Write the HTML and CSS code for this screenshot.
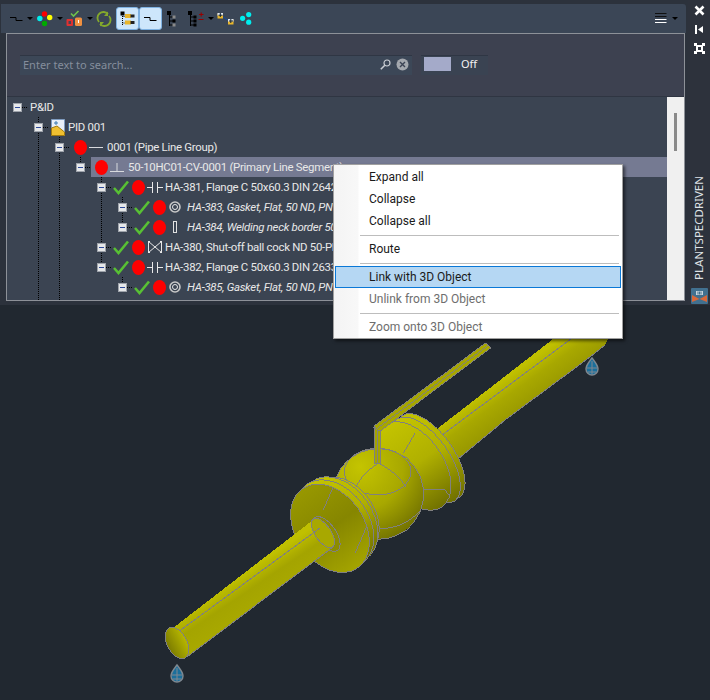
FILE: index.html
```html
<!DOCTYPE html>
<html lang="en">
<head>
<meta charset="utf-8">
<title>Plant Spec Driven</title>
<link rel="stylesheet" href="styles.css">
</head>
<body>
<div class="app">
  <div class="top">
    <section class="palette">
      <div class="toolbar">
        <div class="tool w-line">
          <svg width="13" height="6" viewBox="0 0 13 6"><path d="M0 1.500H6V4.500H12.500" fill="none" stroke="#000" stroke-width="1"/></svg>
          <span class="caret"></span>
        </div>
        <div class="tool w-dots">
          <svg width="16" height="16" viewBox="0 0 16 16"><circle cx="7.500" cy="3" r="2.700" fill="#f00"/><circle cx="2.800" cy="7.500" r="2.700" fill="#0ee"/><circle cx="12.700" cy="6.500" r="2.700" fill="#ff0"/><circle cx="7.500" cy="12.500" r="2.700" fill="#0a0"/></svg>
          <span class="caret"></span>
        </div>
        <div class="tool w-check">
          <svg width="17" height="17" viewBox="0 0 17 17"><path d="M5 3.500L7.500 6 12.500 1" fill="none" stroke="#6fc24a" stroke-width="1.600"/><rect x="0.500" y="9" width="6.500" height="7" rx="1" fill="#e03030"/><rect x="2.500" y="11" width="2.500" height="3" fill="#4a4450"/><rect x="9" y="7.500" width="7" height="8.500" rx="1.500" fill="#f09040"/><path d="M12.500 10v3" stroke="#fff"/></svg>
          <span class="caret"></span>
        </div>
        <div class="tool w-sync">
          <svg width="16" height="16" viewBox="0 0 16 16"><path d="M3 11A6 6 0 0 1 12 3M13 5A6 6 0 0 1 4 13" fill="none" stroke="#84a92c" stroke-width="1.800"/><path d="M12 0.500V5H8zM4 15.500V11H8z" fill="#84a92c"/></svg>
        </div>
        <div class="toggle">
          <svg width="15" height="16" viewBox="0 0 15 16"><path d="M2.500 3V14M2.500 5.500H7M2.500 12H7" fill="none" stroke="#000" stroke-dasharray="1 1"/><rect x="0.500" y="0.500" width="4" height="4" fill="#000"/><rect x="5" y="3" width="6" height="4" fill="#e8b52c"/><rect x="5" y="9.500" width="6" height="4" fill="#e8b52c"/><rect x="10.500" y="3.500" width="4" height="3" fill="#222"/><rect x="10.500" y="10" width="4" height="3" fill="#222"/></svg>
        </div>
        <div class="toggle second">
          <svg width="13" height="6" viewBox="0 0 13 6"><path d="M0 1.500H6V4.500H12.500" fill="none" stroke="#000" stroke-width="1"/></svg>
        </div>
        <div class="tool w-tree">
          <svg width="9" height="16" viewBox="0 0 9 16"><path d="M2.500 2V15M2.500 6H6M2.500 10H6M2.500 14H6" stroke="#000"/><rect x="0" y="0" width="4" height="4"/><rect x="5.500" y="4.500" width="3" height="3" fill="#8a8a8a"/><rect x="5.500" y="8.500" width="3" height="3"/><rect x="5.500" y="12.500" width="3" height="3" fill="#8a8a8a"/></svg>
        </div>
        <div class="tool w-tree2">
          <svg width="16" height="16" viewBox="0 0 16 16"><path d="M2.500 2V15M2.500 6H6M2.500 10H6M2.500 14H6" stroke="#000"/><rect x="0" y="0" width="4" height="4"/><rect x="5.500" y="4.500" width="3" height="3"/><rect x="5.500" y="8.500" width="3" height="3"/><rect x="5.500" y="12.500" width="3" height="3"/><path d="M11 3.500H15.500M13.200 1.500V5.500M10.500 8.500H15.500" stroke="#900" stroke-width="1.100"/></svg>
          <span class="caret"></span>
        </div>
        <div class="tool w-link">
          <svg width="17" height="13" viewBox="0 0 17 13"><rect x="0.500" y="1.500" width="5.500" height="5" fill="#e8b52c"/><rect x="0.500" y="1" width="5.500" height="2.500" fill="#dfe6ee"/><path d="M1.500 3.200H5.500M3.300 1V5" stroke="#123" stroke-width="1"/><path d="M6.500 5L10.500 8" stroke="#1c4c90" stroke-width="1.200"/><rect x="11" y="7.500" width="5.500" height="5" fill="#e8b52c"/><rect x="11" y="7" width="5.500" height="2.500" fill="#dfe6ee"/><path d="M12 9H16M13.800 7V11" stroke="#123" stroke-width="1"/></svg>
        </div>
        <div class="tool w-share">
          <svg width="12" height="13" viewBox="0 0 12 13"><circle cx="8.700" cy="2.600" r="2.600" fill="#0ee"/><circle cx="2.600" cy="6.300" r="2.600" fill="#0ee"/><circle cx="8.700" cy="10.200" r="2.600" fill="#0ee"/></svg>
        </div>
        <div class="menu-btn">
          <svg width="12" height="11" viewBox="0 0 12 11"><path d="M0 .5H11.500M0 3.500H11.500" stroke="#111"/><path d="M0 6.500H11.500" stroke="#fff"/><path d="M0 9.500H11.500" stroke="#fff"/></svg>
          <span class="caret"></span>
        </div>
      </div>

      <div class="frame">
        <div class="search-zone">
          <div class="search">
            <span class="search-text">Enter text to search...</span>
            <svg class="lens" width="11" height="11" viewBox="0 0 11 11"><circle cx="7" cy="4" r="3" fill="none" stroke="#c8ccd2" stroke-width="1.200"/><path d="M4.800 6.200L0.800 10.200" stroke="#c8ccd2" stroke-width="1.600"/></svg>
            <svg class="clear" width="13" height="13" viewBox="0 0 13 13"><circle cx="6.500" cy="6.500" r="6" fill="#a4a8ae"/><path d="M4 4L9 9M9 4L4 9" stroke="#3c4454" stroke-width="1.400"/></svg>
          </div>
          <div class="switch">
            <span class="swatch"></span>
            <span class="switch-label">Off</span>
          </div>
        </div>

        <div class="tree-zone">
          <div class="tree">
            <svg class="guides" width="130" height="204" viewBox="0 0 130 204"><path d="M31.500 20V204M52.500 40V204M73.500 60V68M94.500 80V170M115.500 100V130M115.500 180V186" stroke="#000" stroke-dasharray="1 1" fill="none"/></svg>

            <div class="row l0"><span class="exp"></span><span class="dots"></span><span class="label lt0">P&amp;ID</span></div>

            <div class="row l1"><span class="exp"></span><span class="dots"></span>
              <svg class="doc" width="14" height="17" viewBox="0 0 14 17"><path d="M0.500 0.500H13.500V16.500H0.500Z" fill="#e9f0f8" stroke="#7f9cc0"/><path d="M0.500 9L6 7 13.500 13V16.500H0.500Z" fill="#f0c030" stroke="#a07a10"/><path d="M3 4H7M5 2V6" stroke="#3978b0"/></svg>
              <span class="label lt1">PID 001</span>
            </div>

            <div class="row l2"><span class="exp"></span><span class="dots"></span><span class="red"></span>
              <svg class="sym s14" width="14" height="3" viewBox="0 0 14 3"><path d="M0 1.500H14" stroke="#d8dade"/></svg>
              <span class="label">0001 (Pipe Line Group)</span>
            </div>

            <div class="row l3"><span class="exp"></span><span class="dots"></span>
              <div class="sel">
                <span class="red"></span>
                <svg class="sym s14" width="14" height="9" viewBox="0 0 14 9"><path d="M0 8.500H14M7 0V8" stroke="#d8dade"/></svg>
                <span class="label">50-10HC01-CV-0001 (Primary Line Segment)</span>
              </div>
            </div>

            <div class="row l4"><span class="exp"></span><span class="dots"></span>
              <svg class="check" width="16" height="15" viewBox="0 0 16 15"><path d="M1 8L5.500 13 15 1.500" fill="none" stroke="#58c034" stroke-width="2.600"/></svg>
              <span class="red"></span>
              <svg class="sym" width="16" height="11" viewBox="0 0 16 11"><path d="M0 5.500H5.500M5.500 0V11M10.500 0V11M10.500 5.500H16" stroke="#e8e8e8"/></svg>
              <span class="label">HA-381, Flange C 50x60.3 DIN 2642 PN</span>
            </div>

            <div class="row l5"><span class="exp"></span><span class="dots"></span>
              <svg class="check" width="16" height="15" viewBox="0 0 16 15"><path d="M1 8L5.500 13 15 1.500" fill="none" stroke="#58c034" stroke-width="2.600"/></svg>
              <span class="red"></span>
              <svg class="sym gasket" width="12" height="12" viewBox="0 0 12 12"><circle cx="6" cy="6" r="5" fill="none" stroke="#c8c8c8" stroke-width="1.600"/><circle cx="6" cy="6" r="2.500" fill="none" stroke="#e8e8e8"/></svg>
              <span class="label it">HA-383, Gasket, Flat, 50 ND, PN 16</span>
            </div>

            <div class="row l5"><span class="exp"></span><span class="dots"></span>
              <svg class="check" width="16" height="15" viewBox="0 0 16 15"><path d="M1 8L5.500 13 15 1.500" fill="none" stroke="#58c034" stroke-width="2.600"/></svg>
              <span class="red"></span>
              <svg class="sym gasket" width="12" height="12" viewBox="0 0 12 12"><rect x="4.500" y="0.500" width="3" height="11" fill="none" stroke="#e0e0e0"/></svg>
              <span class="label it">HA-384, Welding neck border 50</span>
            </div>

            <div class="row l4"><span class="exp"></span><span class="dots"></span>
              <svg class="check" width="16" height="15" viewBox="0 0 16 15"><path d="M1 8L5.500 13 15 1.500" fill="none" stroke="#58c034" stroke-width="2.600"/></svg>
              <span class="red"></span>
              <svg class="sym" width="16" height="12" viewBox="0 0 16 12"><path d="M1.500 0.500V11.500L14.500 0.500V11.500ZM1 .5H3M1 11.500H3M13 .5H15M13 11.500H15" fill="none" stroke="#e8e8e8"/></svg>
              <span class="label">HA-380, Shut-off ball cock ND 50-PN</span>
            </div>

            <div class="row l4"><span class="exp"></span><span class="dots"></span>
              <svg class="check" width="16" height="15" viewBox="0 0 16 15"><path d="M1 8L5.500 13 15 1.500" fill="none" stroke="#58c034" stroke-width="2.600"/></svg>
              <span class="red"></span>
              <svg class="sym" width="16" height="11" viewBox="0 0 16 11"><path d="M0 5.500H5.500M5.500 0V11M10.500 0V11M10.500 5.500H16" stroke="#e8e8e8"/></svg>
              <span class="label">HA-382, Flange C 50x60.3 DIN 2633 PN</span>
            </div>

            <div class="row l5"><span class="exp"></span><span class="dots"></span>
              <svg class="check" width="16" height="15" viewBox="0 0 16 15"><path d="M1 8L5.500 13 15 1.500" fill="none" stroke="#58c034" stroke-width="2.600"/></svg>
              <span class="red"></span>
              <svg class="sym gasket" width="12" height="12" viewBox="0 0 12 12"><circle cx="6" cy="6" r="5" fill="none" stroke="#c8c8c8" stroke-width="1.600"/><circle cx="6" cy="6" r="2.500" fill="none" stroke="#e8e8e8"/></svg>
              <span class="label it">HA-385, Gasket, Flat, 50 ND, PN 16</span>
            </div>
          </div>
          <div class="scrollbar"><span class="thumb"></span></div>
        </div>
      </div>
    </section>

    <aside class="rail">
      <svg class="rail-ico" width="11" height="11" viewBox="0 0 11 11"><path d="M1.500 1.500L9.500 9.500M9.500 1.500L1.500 9.500" stroke="#fff" stroke-width="2.600"/></svg>
      <svg class="rail-ico" width="11" height="11" viewBox="0 0 11 11"><path d="M2 1V10" stroke="#fff" stroke-width="2"/><path d="M4 5.500L9 2V9Z" fill="#fff"/></svg>
      <svg class="rail-ico" width="11" height="11" viewBox="0 0 11 11"><path d="M0 0H3V2H8V0H11V3H9V8H11V11H8V9H3V11H0V8H2V3H0Z" fill="#fff" fill-rule="evenodd"/><rect x="4" y="4" width="3" height="3" fill="#2d323c"/></svg>
      <span class="rail-title">PLANTSPECDRIVEN</span>
      <svg class="rail-logo" width="17" height="16" viewBox="0 0 17 16"><rect width="17" height="16" rx="1" fill="#41708f"/><path d="M1 7L8.500 11 16 7V14L8.500 11 1 14Z" fill="#d8683a"/><path d="M5 3H12V7H5Z" fill="#c9d4dc"/><path d="M7 3.500V6.500M8.500 3.500V6.500M10 3.500V6.500" stroke="#41708f"/></svg>
    </aside>
  </div>

  <div class="viewport">
    <svg class="scene" width="710" height="395" viewBox="0 305 710 395">
      <defs>
        <linearGradient id="pipeR" gradientUnits="userSpaceOnUse" x1="500" y1="382" x2="520" y2="410">
          <stop offset="0" stop-color="#c0c000"/><stop offset=".45" stop-color="#a8a800"/><stop offset="1" stop-color="#9a9a00"/>
        </linearGradient>
        <linearGradient id="pipeL" gradientUnits="userSpaceOnUse" x1="243" y1="574" x2="262" y2="602">
          <stop offset="0" stop-color="#c0c000"/><stop offset=".5" stop-color="#a4a400"/><stop offset="1" stop-color="#a8a800"/>
        </linearGradient>
        <linearGradient id="flange" x1="0" y1="0" x2="0" y2="1">
          <stop offset="0" stop-color="#c4c400"/><stop offset=".5" stop-color="#b0b000"/><stop offset="1" stop-color="#707000"/>
        </linearGradient>
        <linearGradient id="face" x1="0" y1="0" x2="0" y2="1">
          <stop offset="0" stop-color="#989800"/><stop offset=".5" stop-color="#868600"/><stop offset="1" stop-color="#a4a400"/>
        </linearGradient>
        <radialGradient id="ball" cx=".3" cy=".2" r=".95">
          <stop offset="0" stop-color="#c4c400"/><stop offset=".5" stop-color="#a8a800"/><stop offset="1" stop-color="#666600"/>
        </radialGradient>
        <linearGradient id="inner" x1="0" y1="0" x2="1" y2="0">
          <stop offset="0" stop-color="#7c7c00"/><stop offset="1" stop-color="#b8b800"/>
        </linearGradient>
      </defs>

      <g class="solid">
        <polygon points="557,336 610,336 605,345 590,357 505,420 440,474 415,446" fill="url(#pipeR)"/>
        <path d="M430,444L575,336" class="wire"/>
        <path d="M440,474L505,420L590,357L605,345" class="wire"/>
      </g>

      <g class="solid" transform="translate(270 340) scale(.3333)">
        <ellipse cx="482" cy="350" rx="70" ry="150" transform="rotate(-35 482 350)" fill="url(#flange)" class="edge"/>
        <ellipse cx="468" cy="360" rx="70" ry="150" transform="rotate(-35 468 360)" fill="url(#flange)" class="edge"/>
        <ellipse cx="430" cy="378" rx="90" ry="150" transform="rotate(-35 430 378)" fill="url(#flange)" class="edge"/>
        <path d="M400 340L435 280M462 450H525M525 450L540 470" class="line"/>

        <circle cx="325" cy="462" r="136" fill="url(#ball)" class="edge"/>
        <ellipse cx="323" cy="395" rx="100" ry="70" class="line"/>
        <path d="M325 370C290 390 262 425 255 450M325 370C360 385 392 415 408 440M310 565C350 570 410 560 452 510" class="line"/>
        <polygon points="312,262 333,270 333,372 315,372" fill="#a4a400" class="edge"/>
        <path d="M323 270V372" class="line"/>
        <polygon points="312,258 648,8 662,24 335,270 322,272" fill="#a6a600" class="edge"/>
        <path d="M322 265L655 16" class="line"/>

        <ellipse cx="236" cy="520" rx="70" ry="118" transform="rotate(-35 236 520)" fill="url(#flange)" class="edge"/>
        <ellipse cx="222" cy="530" rx="92" ry="130" transform="rotate(-35 222 530)" fill="url(#flange)" class="edge"/>
        <ellipse cx="208" cy="540" rx="100" ry="142" transform="rotate(-35 208 540)" fill="url(#flange)" class="edge"/>
        <ellipse cx="193" cy="552" rx="103" ry="145" transform="rotate(-35 193 552)" fill="url(#flange)" class="edge"/>
        <ellipse cx="180" cy="565" rx="103" ry="145" transform="rotate(-35 180 565)" fill="url(#face)" class="edge"/>
        <path d="M190 440L160 510M290 560L255 640" class="line"/>
      </g>

      <g class="solid">
        <ellipse cx="326" cy="534" rx="10" ry="20" transform="rotate(-35 326 534)" fill="#8c8c00" class="wire"/>
        <polygon points="173,628 313,520 333,547 187,657" fill="url(#pipeL)"/>
        <ellipse cx="323" cy="533" rx="8" ry="17" transform="rotate(-35 323 533)" fill="#a8a800" class="wire"/>
        <path d="M187,657L333,547M178,632L320,528" class="wire"/>
        <ellipse cx="177" cy="643" rx="10" ry="17" transform="rotate(-28 177 643)" fill="url(#inner)" class="wire"/>
      </g>

      <g>
        <path d="M592 358C589 362 586 365 586 369A6 6 0 0 0 598 369C598 365 595 362 592 358Z" fill="#1a6f9c" stroke="#7f8890" stroke-width="1.400"/>
        <path d="M587 368H597M592 361V374M588 372H596" stroke="#7f8890" fill="none"/>
        <path d="M177 665C174 669 171 672 171 676A6 6 0 0 0 183 676C183 672 180 669 177 665Z" fill="#1a6f9c" stroke="#7f8890" stroke-width="1.400"/>
        <path d="M172 675H182M177 668V681M173 679H181" stroke="#7f8890" fill="none"/>
      </g>
    </svg>
  </div>

  <nav class="ctx">
    <div class="ctx-item">Expand all</div>
    <div class="ctx-item">Collapse</div>
    <div class="ctx-item">Collapse all</div>
    <div class="ctx-sep"></div>
    <div class="ctx-item">Route</div>
    <div class="ctx-sep"></div>
    <div class="ctx-item active">Link with 3D Object</div>
    <div class="ctx-item off">Unlink from 3D Object</div>
    <div class="ctx-sep"></div>
    <div class="ctx-item off">Zoom onto 3D Object</div>
  </nav>
</div>
</body>
</html>
```

FILE: styles.css
```css
* { box-sizing: border-box; }
html, body { margin: 0; padding: 0; }
body { width: 710px; height: 700px; overflow: hidden; background: #212830; font-family: "Noto Sans", "Open Sans", sans-serif; }

.app { position: relative; width: 710px; height: 700px; display: flex; flex-direction: column; }
.top { display: flex; height: 305px; background: #2c323c; }

.palette { width: 688px; height: 305px; padding: 4px 0 0 1px; background: #2c323c; display: flex; flex-direction: column; }
.toolbar { height: 29px; margin-right: 2px; padding-left: 9px; display: flex; align-items: center; background: #3b4656; border-radius: 0 3px 0 0; }
.tool { display: flex; align-items: center; flex: none; }
.caret { display: inline-block; width: 0; height: 0; border-left: 3px solid transparent; border-right: 3px solid transparent; border-top: 3px solid #000; margin-left: 4px; }
.w-line { width: 27px; }
.w-dots { width: 29px; }
.w-check { width: 30px; }
.w-sync { width: 20px; }
.toggle { width: 23px; height: 23px; flex: none; display: flex; align-items: center; justify-content: center; background: #cde6fb; border: 1px solid #7fb2e2; border-radius: 3px; }
.second { margin-right: 5px; }
.w-tree { width: 21px; }
.w-tree2 { width: 29px; }
.w-link { width: 23px; }
.w-share { width: 20px; }
.menu-btn { margin-left: auto; margin-right: 8px; display: flex; align-items: center; }
.menu-btn .caret { margin-left: 5px; }

.frame { height: 268px; margin-left: 5px; margin-right: 3px; border: 1px solid #8d9198; background: #3d4150; display: flex; flex-direction: column; }
.search-zone { height: 63px; padding: 21px 0 0 13px; display: flex; align-items: flex-start; gap: 9px; border-bottom: 1px solid #2f3542; flex: none; }
.search { width: 392px; height: 20px; padding: 0 3px 2px; display: flex; align-items: center; background: #3c4757; border-top: 1px solid #2f3644; }
.search-text { flex: 1; font-size: 11px; color: #858e9c; }
.lens { margin-right: 5px; }
.switch { width: 67px; height: 20px; padding: 1px 0 0 3px; display: flex; align-items: flex-start; background: #3a4352; border-top: 1px solid #2f3644; }
.swatch { width: 27px; height: 14px; background: #a4aac9; }
.switch-label { margin-left: 10px; font-size: 11px; line-height: 14px; color: #f2f2f2; }

.tree-zone { flex: 1; min-height: 0; display: flex; background: #3b4452; }
.tree { position: relative; flex: 1; min-width: 0; overflow: hidden; }
.guides { position: absolute; left: 0; top: 0; }
.scrollbar { width: 17px; flex: none; background: #f0f0f0; display: flex; justify-content: center; padding-top: 16px; }
.thumb { width: 3px; height: 38px; background: #8a8a8a; }

.row { position: relative; height: 20px; display: flex; align-items: center; white-space: nowrap; color: #e8e8e8; font-family: Roboto, "Noto Sans", sans-serif; font-size: 11.4px; letter-spacing: -0.27px; }
.l0 { padding-left: 6px; }
.l1 { padding-left: 27px; }
.l2 { padding-left: 48px; }
.l3 { padding-left: 69px; }
.l4 { padding-left: 90px; }
.l5 { padding-left: 111px; }
.exp { width: 9px; height: 9px; flex: none; border: 1px solid #9ea3ab; background: #e6e8ea; display: flex; align-items: center; justify-content: center; }
.exp::after { content: ""; width: 5px; height: 1px; background: #2d4a9a; }
.dots { width: 6px; height: 1px; flex: none; background-image: linear-gradient(to right, #000 50%, transparent 50%); background-size: 2px 1px; margin-right: 1px; }
.doc { flex: none; margin-left: 1px; margin-right: 3px; }
.red { width: 13px; height: 15px; flex: none; border-radius: 50%; background: #f00; margin-left: 1px; }
.l2 .red { margin-left: 3px; }
.sym { flex: none; margin-left: 2px; margin-right: 2px; }
.s14 { margin-right: 4px; }
.gasket { margin-left: 3px; margin-right: 6px; }
.check { flex: none; margin-right: 2px; }
.label { line-height: 20px; }
.lt0 { margin-left: 1px; }
.it { font-style: italic; }
.sel { flex: 1; height: 20px; display: flex; align-items: center; background: #757a92; padding-left: 3px; margin-left: -1px; }

.rail { width: 22px; height: 305px; padding: 5px 0 0 0; display: flex; flex-direction: column; align-items: center; background: #2d323c; }
.rail-ico { margin-bottom: 8px; flex: none; }
.rail-title { margin-top: auto; writing-mode: vertical-rl; transform: rotate(180deg); font-size: 11.500px; line-height: 14px; color: #dfe2e6; }
.rail-logo { margin-top: 8px; margin-bottom: 1px; flex: none; }

.viewport { flex: 1; min-height: 0; background: #212830; }
.scene { display: block; }
.solid { shape-rendering: crispEdges; }
.wire { stroke: #808080; stroke-width: 1; }
path.wire { fill: none; }
.edge { stroke: #808080; stroke-width: 3; }
.line { fill: none; stroke: #808080; stroke-width: 3; }

.ctx { position: absolute; left: 333px; top: 164px; width: 290px; height: 175px; padding: 1px; background: linear-gradient(to right, #f4f4f4 0, #f8f8f8 24px, #fff 25px); border: 1px solid #a0a0a0; box-shadow: 2px 2px 3px rgba(0,0,0,.55); font-family: Roboto, "Noto Sans", sans-serif; font-size: 12px; color: #1a1a1a; }
.ctx-item { height: 22px; line-height: 20px; padding-left: 33px; border: 1px solid transparent; }
.ctx-sep { height: 1px; margin: 3px 2px 2px 25px; background: #bdbdbd; }
.active { background: #b5d7f3; border-color: #0a78d7; }
.off { color: #6e6e6e; }
```
